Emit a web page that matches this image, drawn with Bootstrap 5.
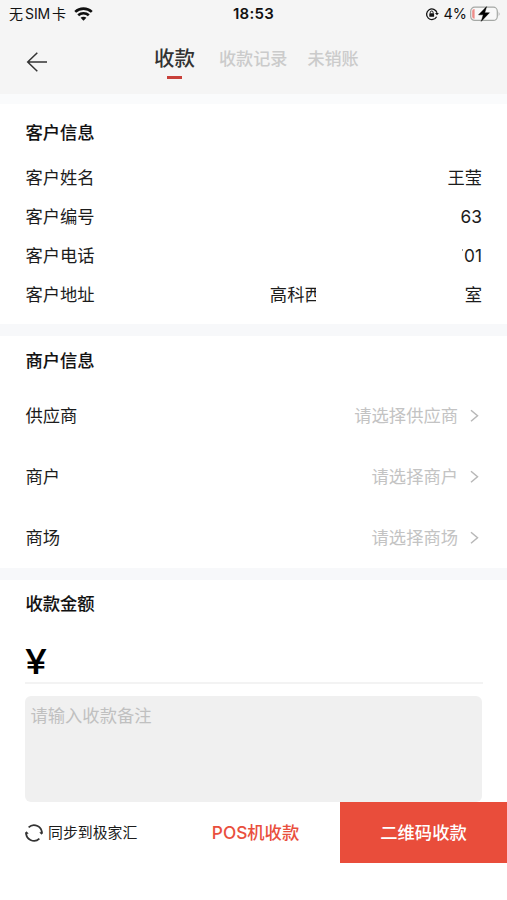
<!DOCTYPE html>
<html lang="zh-CN">
<head>
<meta charset="utf-8">
<meta name="viewport" content="width=device-width, initial-scale=1">
<title>收款</title>
<link rel="stylesheet" href="https://cdn.jsdelivr.net/npm/bootstrap@5.3.0/dist/css/bootstrap.min.css">
<style>
body{font-family:Inter,"Noto Sans CJK SC",sans-serif;font-size:17.3px;line-height:26px;color:#1c1c1c;background:#fff;overflow:hidden}
svg{display:block;flex:none}
.app{height:900px}
.top{height:94px;background:#f5f5f5}
.status{height:28px;padding:0 6px 0 9px;color:#111;font-size:14px;line-height:28px}
.status>div{flex:1 1 0}
.sim{margin:0 2px;letter-spacing:-.1px}
.wifi{margin-left:8px}
.clock{font-weight:600;font-size:15px;letter-spacing:.3px;margin-left:-3px}
.power{font-size:14.4px;margin:0 3px 0 5px}
.bar{height:66px;padding-left:26px}
.back{margin-top:24px}
.tabs{margin-left:106px;color:#cbcbcb;font-size:17.1px;font-weight:500;padding-top:18px}
.tab-on{color:#333;font-size:20.5px}
.tab-on::after{content:"";display:block;width:15px;height:3px;margin:4px auto 0;background:#c8403a}
.strip{height:12px;background:#f7f8fa;flex:none}
.strip-top{height:10px;background:#fafbfc}
.block{padding:0 25px 0 25.5px}
.customer{height:220px}
.merchant{height:232px}
.payment{height:222px}
.ttl{font-weight:500;color:#111;-webkit-text-stroke:.1px #111}
.customer .ttl{padding:16px 0 12px}
.merchant .ttl{padding:12px 0 11px}
.payment .ttl{padding-top:11px}
.info{height:39px}
.pick{height:61px}
.hint{color:#c3c3c3}
.tick::before{content:"";position:absolute;left:-2px;top:6px;width:1px;height:2px;background:#999}
.masked{margin-right:143px}
.masked::after{content:"";position:absolute;right:0;top:0;width:6px;height:100%;background:#fff}
.yen{font-size:34px;font-weight:500;line-height:40px;color:#000;transform:scaleX(1.16);transform-origin:0 50%}
.amount{height:67px;margin:0 -1px;padding-top:25px;border-bottom:2px solid #f3f3f3}
.note{height:106px;margin:12px 0 0 -1px;padding:7px 6px;background:#f0f0f0;border-radius:6px;color:#c0c0c0}
.foot{height:61px}
.sync{width:171px;padding-left:24px;font-size:14.9px}
.pos{width:169px;color:#e94f3d;font-weight:500}
.qr{background:#e94d3b;color:#fff;font-weight:500}
</style>
<script src="https://cdn.jsdelivr.net/npm/bootstrap@5.3.0/dist/js/bootstrap.bundle.min.js"></script>
</head>
<body>
<main class="app d-flex flex-column">
  <header class="top">
    <div class="status d-flex">
      <div class="d-flex align-items-center"><span>无</span><span class="sim">SIM</span><span>卡</span>
        <svg class="wifi" width="19" height="14" viewBox="0 0 19 14" fill="none" stroke="#111" stroke-width="2.6"><path d="M1.200 4.900C5.800.5 13.200.5 17.800 4.900M4.200 8.200c2.900-2.700 7.700-2.700 10.600 0"/><path d="M9.500 13.700 6.600 10.800c1.600-1.400 4.200-1.400 5.800 0z" fill="#111" stroke="none"/></svg>
      </div>
      <span class="clock">18:53</span>
      <div class="d-flex align-items-center justify-content-end">
        <svg width="14" height="14" viewBox="0 0 14 14" fill="none" stroke="#111"><path d="M12 5.800A5.300 5.300 0 1 0 11.600 9.700" stroke-width="1.300"/><path d="m10 5.900 2 2.300L13.900 5.900z" fill="#111" stroke="none"/><rect x="4.300" y="6.200" width="4.800" height="3.600" rx=".5" fill="#111" stroke="none"/><path d="M5.300 6.300V5.400a1.400 1.400 0 0 1 2.800 0v.9"/></svg>
        <span class="power">4%</span>
        <svg width="31" height="16" viewBox="0 0 31 16"><rect x=".7" y="1.200" width="26.600" height="13.200" rx="4" fill="#f8f8f8" stroke="#a5a8a5" stroke-width="1.200"/><path d="M2.200 5q0-2 2.400-2v9.700q-2.400 0-2.400-2z" fill="#ee8c88"/><path d="M28.700 5.500q1.800 2.300 0 4.700z" fill="#aaa"/><path d="M16.600.6 8.500 8.800h4.700L11.200 15.400l8.300-8.700h-4.700z" fill="#000" stroke="#000" stroke-width=".4"/></svg>
      </div>
    </div>
    <nav class="bar d-flex align-items-start">
      <svg class="back" width="22" height="20" viewBox="0 0 22 20" fill="none" stroke="#333" stroke-width="1.500"><path d="M11.300.7 1.700 10l9.600 9.300M1.700 10H21"/></svg>
      <div class="tabs d-flex">
        <div class="tab-on">收款</div><div class="ps-4">收款记录</div><div class="ps-3 ms-1">未销账</div>
      </div>
    </nav>
  </header>
  <div class="strip strip-top"></div>
  <section class="block customer">
    <div class="ttl">客户信息</div>
    <div class="info d-flex align-items-center justify-content-between"><span>客户姓名</span><span>王莹</span></div>
    <div class="info d-flex align-items-center justify-content-between"><span>客户编号</span><span>63</span></div>
    <div class="info d-flex align-items-center justify-content-between"><span>客户电话</span><span class="tick position-relative">01</span></div>
    <div class="info d-flex align-items-center"><span class="me-auto">客户地址</span><span class="masked position-relative">高科西</span><span>室</span></div>
  </section>
  <div class="strip"></div>
  <section class="block merchant">
    <div class="ttl">商户信息</div>
    <div class="pick d-flex align-items-center"><span class="me-auto">供应商</span><span class="hint">请选择供应商</span><svg width="24" height="14" viewBox="0 0 24 14" fill="none" stroke="#b8b8b8" stroke-width="1.500"><path d="m13 1.200 6.500 5.500-6.500 5.500"/></svg></div>
    <div class="pick d-flex align-items-center"><span class="me-auto">商户</span><span class="hint">请选择商户</span><svg width="24" height="14" viewBox="0 0 24 14" fill="none" stroke="#b8b8b8" stroke-width="1.500"><path d="m13 1.200 6.500 5.500-6.500 5.500"/></svg></div>
    <div class="pick d-flex align-items-center"><span class="me-auto">商场</span><span class="hint">请选择商场</span><svg width="24" height="14" viewBox="0 0 24 14" fill="none" stroke="#b8b8b8" stroke-width="1.500"><path d="m13 1.200 6.500 5.500-6.500 5.500"/></svg></div>
  </section>
  <div class="strip"></div>
  <section class="block payment">
    <div class="ttl">收款金额</div>
    <div class="amount d-flex"><div class="yen">¥</div></div>
    <div class="note">请输入收款备注</div>
  </section>
  <footer class="foot d-flex">
    <div class="sync d-flex align-items-center"><svg class="me-1" width="20" height="20" viewBox="0 0 20 20" fill="none" stroke="#333" stroke-width="1.700"><path d="M4.600 4.300A7.800 7.800 0 0 1 17.700 11M15.400 15.700A7.800 7.800 0 0 1 2.300 9"/><path d="m15.300 9.400 2.400 2.400 1.300-3.200zM4.700 10.600 2.300 8.200 1 11.400z" fill="#333" stroke="none"/></svg><span>同步到极家汇</span></div>
    <div class="pos d-flex align-items-center justify-content-center">POS机收款</div>
    <div class="qr flex-fill d-flex align-items-center justify-content-center">二维码收款</div>
  </footer>
</main>
</body>
</html>
